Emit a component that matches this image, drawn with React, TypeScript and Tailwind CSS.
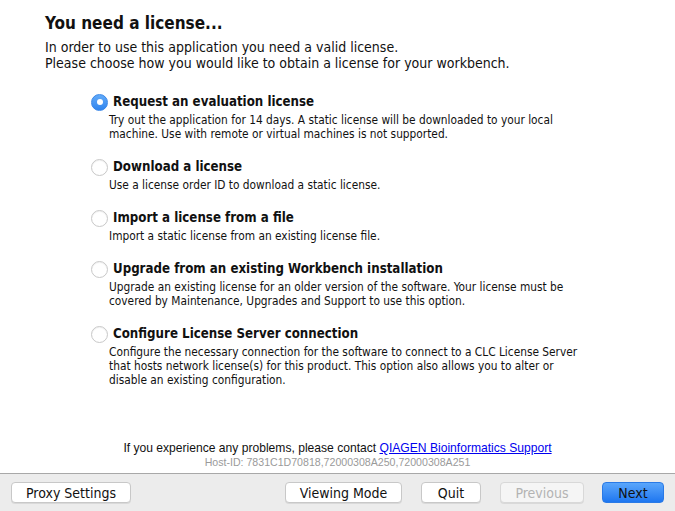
import React from 'react';

const OPTIONS = [
  {
    title: 'Request an evaluation license',
    lines: [
      'Try out the application for 14 days. A static license will be downloaded to your local',
      'machine. Use with remote or virtual machines is not supported.',
    ],
  },
  {
    title: 'Download a license',
    lines: ['Use a license order ID to download a static license.'],
  },
  {
    title: 'Import a license from a file',
    lines: ['Import a static license from an existing license file.'],
  },
  {
    title: 'Upgrade from an existing Workbench installation',
    lines: [
      'Upgrade an existing license for an older version of the software. Your license must be',
      'covered by Maintenance, Upgrades and Support to use this option.',
    ],
  },
  {
    title: 'Configure License Server connection',
    lines: [
      'Configure the necessary connection for the software to connect to a CLC License Server',
      'that hosts network license(s) for this product. This option also allows you to alter or',
      'disable an existing configuration.',
    ],
  },
];

const Radio: React.FC<{ checked: boolean }> = ({ checked }) =>
  checked ? (
    <span className="w-[17px] h-[17px] rounded-full bg-gradient-to-b from-[#62abf9] to-[#2f84ee] border border-[#3a87e8] flex items-center justify-center shrink-0">
      <span className="w-[6px] h-[6px] rounded-full bg-white" />
    </span>
  ) : (
    <span className="w-[17px] h-[17px] rounded-full bg-white border border-[#c8c8c8] shadow-[inset_0_1px_1px_rgba(0,0,0,0.06)] shrink-0" />
  );

const Btn: React.FC<{ label: string; w: string; primary?: boolean; disabled?: boolean }> = ({
  label,
  w,
  primary,
  disabled,
}) => (
  <button
    className={
      primary
        ? `${w} h-[21px] rounded-[4px] bg-gradient-to-b from-[#5aa6fb] to-[#1d76f0] border border-[#2a7ae6] text-[#111] text-[14px] leading-none`
        : `${w} h-[21px] rounded-[4px] border shadow-[0_1px_0_rgba(0,0,0,0.08)] text-[14px] leading-none ${
            disabled ? 'text-[#b3b3b3] bg-[#f5f5f5] border-[#d8d8d8]' : 'text-[#111] bg-white border-[#c8c8c8]'
          }`
    }
  >
    {label}
  </button>
);

export default function App() {
  return (
    <div className="w-[675px] h-[511px] bg-white flex flex-col overflow-hidden font-['DejaVu_Sans_Condensed','DejaVu_Sans',sans-serif] text-[#111]">
      <div className="flex-1 flex flex-col pt-[12px]">
        <div className="pl-[45px]">
          <h1 className="text-[17px] font-bold leading-[22px]">You need a license...</h1>
          <p className="mt-[5px] text-[14px] leading-[16px]">
            In order to use this application you need a valid license.
            <br />
            Please choose how you would like to obtain a license for your workbench.
          </p>

          {/* License options */}
          <div className="mt-[22px] ml-[46px] flex flex-col">
            {OPTIONS.map((o, i) => (
              <div key={i} className={i === 0 ? '' : 'mt-[17px]'}>
                <div className="flex items-center h-[18px]">
                  <Radio checked={i === 0} />
                  <span className="ml-[5px] text-[13.2px] font-bold">{o.title}</span>
                </div>
                <div className="ml-[18px] mt-[2px] text-[11.8px] leading-[14px]">
                  {o.lines.map((l, j) => (
                    <div key={j}>{l}</div>
                  ))}
                </div>
              </div>
            ))}
          </div>
        </div>

        <div className="mt-auto mb-[4px] flex flex-col items-center font-['Liberation_Sans',Arial,sans-serif]">
          <div className="text-[12.1px] leading-[14px]">
            If you experience any problems, please contact{' '}
            <a href="#" className="text-[#0000ee] underline">
              QIAGEN Bioinformatics Support
            </a>
          </div>
          <div className="text-[10.6px] leading-[14px] text-[#9a9a9a]">
            Host-ID: 7831C1D70818,72000308A250,72000308A251
          </div>
        </div>
      </div>

      {/* Button bar */}
      <div className="h-[38px] shrink-0 bg-[#ececec] border-t border-[#a8a8a8] flex items-center px-[11px]">
        <Btn label="Proxy Settings" w="w-[120px]" />
        <div className="flex-1" />
        <Btn label="Viewing Mode" w="w-[117px]" />
        <div className="w-[19px]" />
        <Btn label="Quit" w="w-[60px]" />
        <div className="w-[19px]" />
        <Btn label="Previous" w="w-[84px]" disabled />
        <div className="w-[18px]" />
        <Btn label="Next" w="w-[62px]" primary />
      </div>
    </div>
  );
}
